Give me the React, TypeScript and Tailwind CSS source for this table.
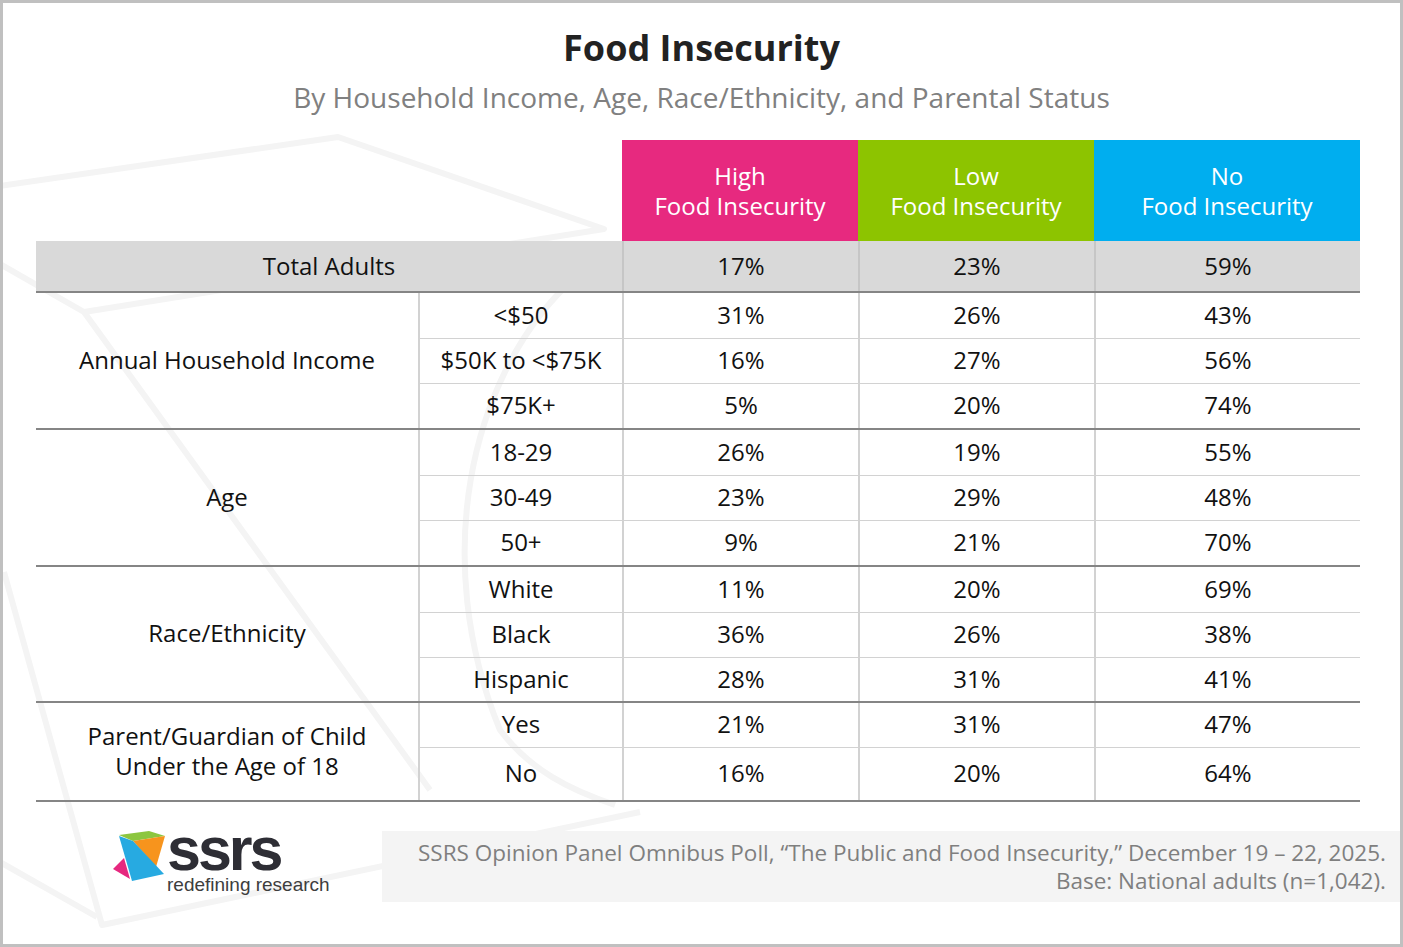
import React from "react";

type Row = { label: string; high: string; low: string; none: string };
type Group = { title: string[]; rows: Row[]; heights: string[] };

const groups: Group[] = [
  {
    title: ["Annual Household Income"],
    heights: ["h-[45px]", "h-[45px]", "h-[45px]"],
    rows: [
      { label: "<$50", high: "31%", low: "26%", none: "43%" },
      { label: "$50K to <$75K", high: "16%", low: "27%", none: "56%" },
      { label: "$75K+", high: "5%", low: "20%", none: "74%" },
    ],
  },
  {
    title: ["Age"],
    heights: ["h-[45px]", "h-[45px]", "h-[45px]"],
    rows: [
      { label: "18-29", high: "26%", low: "19%", none: "55%" },
      { label: "30-49", high: "23%", low: "29%", none: "48%" },
      { label: "50+", high: "9%", low: "21%", none: "70%" },
    ],
  },
  {
    title: ["Race/Ethnicity"],
    heights: ["h-[45px]", "h-[45px]", "h-[44px]"],
    rows: [
      { label: "White", high: "11%", low: "20%", none: "69%" },
      { label: "Black", high: "36%", low: "26%", none: "38%" },
      { label: "Hispanic", high: "28%", low: "31%", none: "41%" },
    ],
  },
  {
    title: ["Parent/Guardian of Child", "Under the Age of 18"],
    heights: ["h-[44px]", "h-[53px]"],
    rows: [
      { label: "Yes", high: "21%", low: "31%", none: "47%" },
      { label: "No", high: "16%", low: "20%", none: "64%" },
    ],
  },
];

const font = { fontFamily: '"Open Sans", "Noto Sans", sans-serif' };
const arial = { fontFamily: '"Liberation Sans", Arial, sans-serif' };

function Backdrop() {
  // faint decorative outlines behind the table
  return (
    <svg className="absolute inset-0 z-0" width="1397" height="941" viewBox="3 3 1397 941" fill="none">
      <g stroke="#f4f4f4" strokeWidth="6" strokeLinejoin="round">
        <polyline points="0,186 338,137 604,229 84,312" />
        <polyline points="0,264 84,312 430,790" />
        <path d="M566 286 C 470 380, 430 560, 500 730 C 530 770, 570 790, 615 805" />
        <polyline points="4,572 102,925 640,812" />
        <polyline points="0,862 97,917" />
      </g>
    </svg>
  );
}

function Logo() {
  return (
    <div className="flex items-start -mt-[4px]">
      <svg width="56" height="52" viewBox="110 830 56 52" className="mt-[3px]">
        <polygon points="119,835 149,831 165,836 133,841" fill="#8cc63f" />
        <polygon points="133,841 165,836 156,867" fill="#f7941d" />
        <polygon points="119,836 133,841 164,874 132,881" fill="#27aae1" />
        <polygon points="113,869 124,858 130,879" fill="#e6287f" />
      </svg>
      <div className="flex flex-col ml-[1px]">
        <span className="text-[61px] leading-[44px] h-[44px] font-bold text-[#2e2e35] tracking-[-3px]" style={arial}>
          ssrs
        </span>
        <span className="mt-[3px] text-[19px] leading-[22px] text-[#3d3d3d] whitespace-nowrap" style={arial}>
          redefining research
        </span>
      </div>
    </div>
  );
}

export default function App() {
  return (
    <div
      className="relative w-[1403px] h-[947px] border-[3px] border-[#c0c0c0] bg-white overflow-hidden text-[#111]"
      style={font}
    >
      <Backdrop />
      <div className="relative z-10 flex flex-col">
        <h1 className="pt-[23px] text-center text-[36px] leading-[44px] font-bold text-[#222]">
          Food Insecurity
        </h1>
        <p className="mt-[9px] text-center text-[28px] leading-[36px] text-[#808080]">
          By Household Income, Age, Race/Ethnicity, and Parental Status
        </p>

        <div className="mt-[25px] ml-[33px] w-[1324px] text-[24px]">
          {/* column headers */}
          <div className="flex h-[101px]">
            <div className="w-[586px]" />
            <div className="w-[236px] bg-[#e7297f] text-white flex flex-col items-center justify-center leading-[30px]">
              <span>High</span>
              <span>Food Insecurity</span>
            </div>
            <div className="w-[236px] bg-[#8dc400] text-white flex flex-col items-center justify-center leading-[30px]">
              <span>Low</span>
              <span>Food Insecurity</span>
            </div>
            <div className="w-[266px] bg-[#00aeef] text-white flex flex-col items-center justify-center leading-[30px]">
              <span>No</span>
              <span>Food Insecurity</span>
            </div>
          </div>

          {/* total row */}
          <div className="flex h-[52px] bg-[#d9d9d9] border-b-2 border-[#858585]">
            <div className="w-[586px] flex items-center justify-center">Total Adults</div>
            <div className="w-[236px] flex items-center justify-center border-l-2 border-[#c6c6c6]">17%</div>
            <div className="w-[236px] flex items-center justify-center border-l-2 border-[#c6c6c6]">23%</div>
            <div className="w-[266px] flex items-center justify-center border-l-2 border-[#c6c6c6]">59%</div>
          </div>

          {groups.map((g, gi) => (
            <div key={gi} className="flex border-b-2 border-[#858585]">
              <div className="w-[382px] pb-[2px] flex flex-col items-center justify-center leading-[30px]">
                {g.title.map((t) => (
                  <span key={t}>{t}</span>
                ))}
              </div>
              <div className="flex-1 flex flex-col">
                {g.rows.map((r, ri) => (
                  <div
                    key={r.label}
                    className={`flex ${g.heights[ri]} ${ri > 0 ? "border-t border-[#d2d2d2]" : ""}`}
                  >
                    <div className="w-[204px] pb-[2px] flex items-center justify-center border-l-2 border-[#d2d2d2]">{r.label}</div>
                    <div className="w-[236px] pb-[2px] flex items-center justify-center border-l-2 border-[#d2d2d2]">{r.high}</div>
                    <div className="w-[236px] pb-[2px] flex items-center justify-center border-l-2 border-[#d2d2d2]">{r.low}</div>
                    <div className="w-[266px] pb-[2px] flex items-center justify-center border-l-2 border-[#d2d2d2]">{r.none}</div>
                  </div>
                ))}
              </div>
            </div>
          ))}
        </div>

        {/* footer */}
        <div className="mt-[29px] flex">
          <div className="w-[379px] pl-[107px]">
            <Logo />
          </div>
          <div className="flex-1 h-[71px] bg-[#f4f4f4] flex flex-col items-end justify-center pr-[14px] text-[22.5px] leading-[28px] text-[#7f7f7f]">
            <span className="whitespace-nowrap">SSRS Opinion Panel Omnibus Poll, “The Public and Food Insecurity,” December 19 – 22, 2025.</span>
            <span>Base: National adults (n=1,042).</span>
          </div>
        </div>
      </div>
    </div>
  );
}
